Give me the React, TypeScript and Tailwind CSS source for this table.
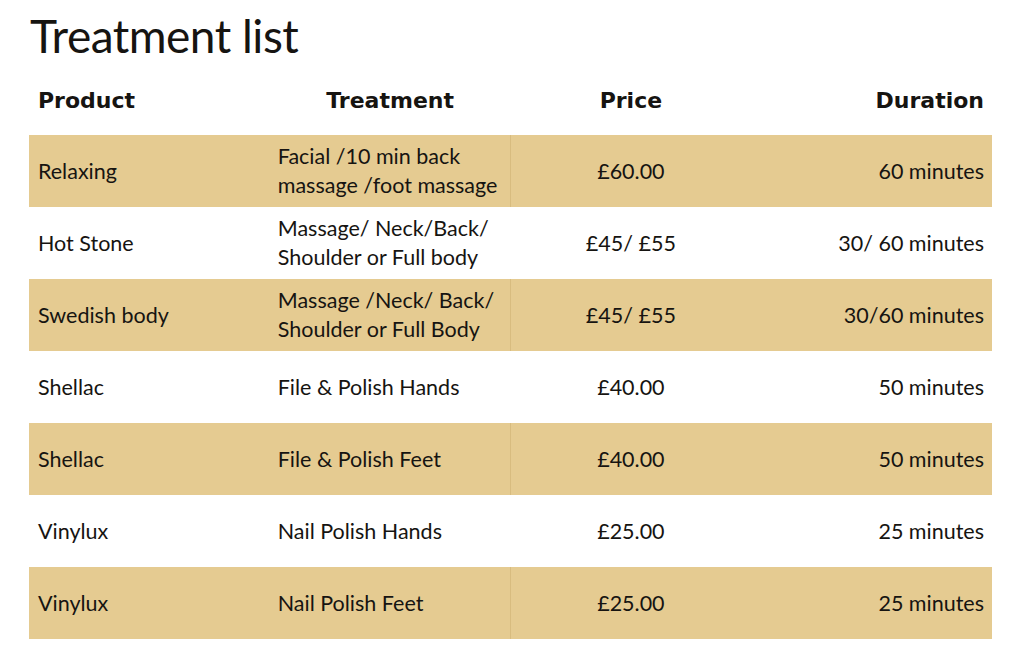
import React from "react";

type Row = { product: string; treatment: string[]; price: string; duration: string };

const rows: Row[] = [
  { product: "Relaxing", treatment: ["Facial /10 min back", "massage /foot massage"], price: "£60.00", duration: "60 minutes" },
  { product: "Hot Stone", treatment: ["Massage/ Neck/Back/", "Shoulder or Full body"], price: "£45/ £55", duration: "30/ 60 minutes" },
  { product: "Swedish body", treatment: ["Massage /Neck/ Back/", "Shoulder or Full Body"], price: "£45/ £55", duration: "30/60 minutes" },
  { product: "Shellac", treatment: ["File & Polish Hands"], price: "£40.00", duration: "50 minutes" },
  { product: "Shellac", treatment: ["File & Polish Feet"], price: "£40.00", duration: "50 minutes" },
  { product: "Vinylux", treatment: ["Nail Polish Hands"], price: "£25.00", duration: "25 minutes" },
  { product: "Vinylux", treatment: ["Nail Polish Feet"], price: "£25.00", duration: "25 minutes" },
];

export default function App() {
  return (
    <div className="w-[1017px] h-[656px] bg-white text-[#161411] font-['Lato','Liberation_Sans',sans-serif] overflow-hidden">
      <h1 className="pl-[30px] pt-[8px] text-[46px] leading-[56px] tracking-[-0.5px]">Treatment list</h1>

      <div className="ml-[29px] mt-[16px] w-[963px]">
        <div className="grid grid-cols-4 h-[55px] items-start pt-[6px] text-[22px] leading-[30px] font-bold font-['DejaVu_Sans',sans-serif]">
          <div className="pl-[9px]">Product</div>
          <div className="text-center">Treatment</div>
          <div className="text-center">Price</div>
          <div className="text-right pr-[8px]">Duration</div>
        </div>

        {rows.map((r, i) => {
          const tan = i % 2 === 0;
          return (
            <div
              key={i}
              className={`grid grid-cols-4 h-[72px] items-center text-[21.5px] leading-[29px] ${tan ? "bg-[#e5cb91]" : "bg-white"}`}
            >
              <div className="pl-[9px]">{r.product}</div>
              <div className={`h-full flex flex-col justify-center pl-[8px] ${tan ? "border-r border-[#d8bc7f]" : ""}`}>
                {r.treatment.map((t) => (
                  <div key={t}>{t}</div>
                ))}
              </div>
              <div className="text-center">{r.price}</div>
              <div className="text-right pr-[8px]">{r.duration}</div>
            </div>
          );
        })}
      </div>
    </div>
  );
}
